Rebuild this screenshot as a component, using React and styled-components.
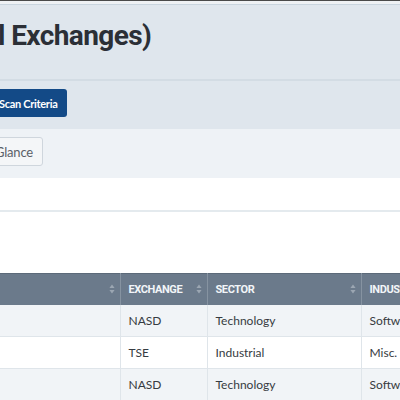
import React from "react";
import styled, { createGlobalStyle } from "styled-components";

const Global = createGlobalStyle`
  html, body { margin: 0; padding: 0; background: #fff; overflow: hidden; }
  body { font-family: Lato, "Open Sans", sans-serif; width: 400px; height: 400px; }
`;

const Page = styled.div`
  width: 400px;
  height: 400px;
  overflow: hidden;
  display: flex;
  flex-direction: column;
`;

const TopStrip = styled.div`
  height: 1px;
  background: #4a4a4a;
  border-bottom: 3px solid #eef1f4;
  flex: none;
`;

const Header = styled.header`
  flex: none;
  background: #dfe6ed;
  border-top: 1px solid #c9d5df;
  border-bottom: 2px solid #d3dce4;
  height: 74px;
  display: flex;
  align-items: flex-start;
`;

const Title = styled.h1`
  margin: 12px 0 0 -2px;
  font-family: Roboto, "Liberation Sans", sans-serif;
  font-weight: 700;
  font-size: 28px;
  letter-spacing: -0.6px;
  line-height: 38px;
  color: #2b2f36;
  white-space: nowrap;
`;

const Toolbar = styled.div`
  flex: none;
  background: #dfe6ed;
  height: 48px;
  padding-top: 8px;
  box-sizing: border-box;
  display: flex;
  align-items: flex-start;
`;

const PrimaryButton = styled.button`
  height: 28px;
  margin-left: -4px;
  padding: 0 10px 0 3px;
  border: none;
  border-radius: 3px;
  background: #134a87;
  color: #fff;
  font-family: Lato, sans-serif;
  font-weight: 700;
  font-size: 11px;
  letter-spacing: -0.3px;
  cursor: pointer;
`;

const FilterBar = styled.div`
  flex: none;
  background: #eef2f6;
  height: 49px;
  padding-top: 8px;
  box-sizing: border-box;
  display: flex;
  align-items: flex-start;
`;

const OutlineButton = styled.button`
  height: 29px;
  margin-left: -11px;
  padding: 0 9px 0 5px;
  border: 1px solid #cfd6dd;
  border-radius: 3px;
  background: #f4f6f8;
  color: #5b6168;
  font-family: Lato, sans-serif;
  font-weight: 400;
  font-size: 13px;
  letter-spacing: -0.2px;
  cursor: pointer;
`;

const Spacer = styled.div`
  flex: none;
  height: ${(p) => p.h}px;
  background: #fff;
  border-bottom: ${(p) => (p.line ? "2px solid #e4eaee" : "none")};
`;

const Table = styled.table`
  flex: none;
  border-collapse: collapse;
  table-layout: fixed;
  width: 560px;
  font-family: Lato, sans-serif;
`;

const Th = styled.th`
  width: ${(p) => p.w}px;
  height: 31px;
  box-sizing: border-box;
  background: #6b7a8b;
  color: #f2f5f8;
  font-family: Roboto, "Liberation Sans", sans-serif;
  font-weight: 700;
  font-size: 11px;
  letter-spacing: -0.4px;
  text-align: left;
  padding: 0 5px 0 8px;
  border-right: 1px solid #8693a1;
  border-top: 1px solid #5c6a79;
  white-space: nowrap;
  overflow: hidden;
`;

const ThInner = styled.div`
  display: flex;
  align-items: center;
  justify-content: space-between;
`;

const Tr = styled.tr`
  background: ${(p) => (p.alt ? "#f1f4f7" : "#fff")};
`;

const Td = styled.td`
  height: 32px;
  box-sizing: border-box;
  padding: 0 8px;
  font-size: 12px;
  color: #363b41;
  border-right: 1px solid #dfe5ea;
  border-bottom: 1px solid #dfe5ea;
  white-space: nowrap;
  overflow: hidden;
`;

const SortIcon = () => (
  <svg width="6" height="10" viewBox="0 0 6 10">
    <path d="M3 0.5 L5.6 4 H0.4 Z M3 9.5 L5.6 6 H0.4 Z" fill="#9ba6b2" />
  </svg>
);

const columns = [
  { label: "", w: 120, sort: true },
  { label: "EXCHANGE", w: 87, sort: true },
  { label: "SECTOR", w: 154, sort: true },
  { label: "INDUSTRY", w: 199, sort: false },
];

const rows = [
  ["", "NASD", "Technology", "Software"],
  ["", "TSE", "Industrial", "Misc. Industrial"],
  ["", "NASD", "Technology", "Software"],
];

export default function App() {
  return (
    <Page>
      <Global />
      <TopStrip />
      <Header>
        <Title>l Exchanges)</Title>
      </Header>
      <Toolbar>
        <PrimaryButton>Scan Criteria</PrimaryButton>
      </Toolbar>
      <FilterBar>
        <OutlineButton>Glance</OutlineButton>
      </FilterBar>
      <Spacer h={32} line />
      <Spacer h={61} />
      <Table>
        <thead>
          <tr>
            {columns.map((c, i) => (
              <Th key={i} w={c.w}>
                <ThInner>
                  <span>{c.label}</span>
                  {c.sort && <SortIcon />}
                </ThInner>
              </Th>
            ))}
          </tr>
        </thead>
        <tbody>
          {rows.map((r, i) => (
            <Tr key={i} alt={i % 2 === 0}>
              {r.map((cell, j) => (
                <Td key={j}>{cell}</Td>
              ))}
            </Tr>
          ))}
        </tbody>
      </Table>
    </Page>
  );
}
